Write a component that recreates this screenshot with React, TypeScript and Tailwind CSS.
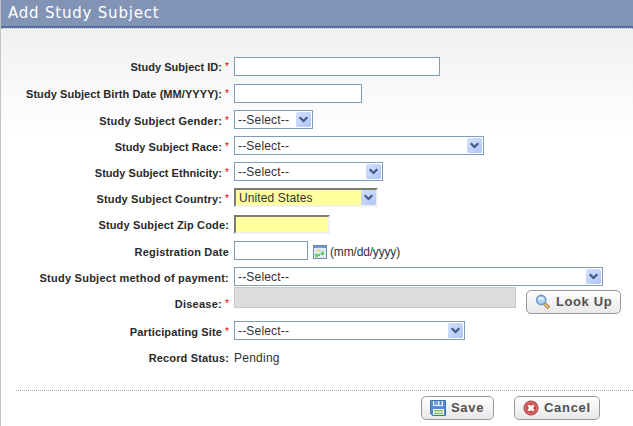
import type { ReactNode } from "react";

function Row({ label, required, height, tracking, pad = "pt-[4px]", children }: {
  label: string; required?: boolean; height: string; tracking: string; pad?: string; children?: ReactNode;
}) {
  return (
    <div className={`flex items-start ${height}`}>
      <div className={`flex w-[228px] shrink-0 justify-end whitespace-nowrap text-[11px] leading-[15px] font-bold text-[#292929] ${pad}`}>
        <span className={tracking}>{label}</span>
        {required && <span className="ml-[3px] w-[4px] text-[10px] leading-[14px] font-normal text-[#e00000]">*</span>}
      </div>
      <div className="ml-[5px] flex items-start">{children}</div>
    </div>
  );
}

function Arrow() {
  return (
    <svg width="15" height="15" viewBox="0 0 15 15" className="shrink-0">
      <defs>
        <linearGradient id="arrowFill" x1="0" y1="0" x2="1" y2="1">
          <stop offset="0" stopColor="#d5e1fd" />
          <stop offset="1" stopColor="#afc6f8" />
        </linearGradient>
      </defs>
      <rect width="15" height="15" rx="1.5" fill="url(#arrowFill)" />
      <path d="M3.7 5.3 7.5 9 11.3 5.3" fill="none" stroke="#435b86" strokeWidth="2.3" />
    </svg>
  );
}

function Select({ width, text = "--Select--" }: { width: string; text?: string }) {
  return (
    <div className={`flex h-[19px] items-center justify-between border border-[#7f9db9] bg-white pr-px pl-[3px] text-[12px] text-[#303030] ${width}`}>
      <span className="pt-[2px] leading-[15px] tracking-[0.18px]">{text}</span>
      <Arrow />
    </div>
  );
}

function Field({ width }: { width: string }) {
  return <div className={`h-[19px] border border-[#7f9db9] bg-white ${width}`} />;
}

function Button({ width, icon, text, tracking }: { width: string; icon: ReactNode; text: string; tracking: string }) {
  return (
    <button className={`flex h-[24px] items-center rounded-[5px] border border-[#989898] bg-linear-to-b from-white to-[#e8e8e8] pl-[8px] text-[13px] font-bold whitespace-nowrap text-[#505050] ${width}`}>
      {icon}
      <span className={`ml-[5px] leading-[16px] ${tracking}`}>{text}</span>
    </button>
  );
}

const CalendarIcon = () => (
  <svg width="14" height="14" viewBox="0 0 14 14">
    <rect x=".5" y=".5" width="13" height="13" fill="#edf4fc" stroke="#6989ad" />
    <path d="M1 2h12" stroke="#6b98ce" strokeWidth="2" />
    <path d="M1 6h12M1 9h12M4 3v10M7 3v10M10 3v10" stroke="#bdd0e5" strokeWidth=".7" />
    <path d="M4 4h3v3H4z" fill="#f5df94" />
    <path d="M8 7h3v3H8zM2 9h3v3H2zM5 9h2v2H5z" fill="#65cf55" />
  </svg>
);

const SearchIcon = () => (
  <svg width="16" height="16" viewBox="0 0 16 16">
    <path d="m9 9 5 5" stroke="#a9763c" strokeWidth="3.3" />
    <path d="m9 9 4.7 4.7" stroke="#f2cd8a" strokeWidth="1.5" />
    <circle cx="6.2" cy="6" r="4.6" fill="#a9d4f5" stroke="#7898c4" strokeWidth="1.6" />
    <path d="M3 6.2a3.2 3.2 0 0 1 6.4 0Q6.2 4.8 3 6.2" fill="#e1f4ff" />
  </svg>
);

const SaveIcon = () => (
  <svg width="16" height="16" viewBox="0 0 16 16">
    <path d="M.5.5h15v15h-13l-2-2z" fill="#578bd5" stroke="#3d70b7" />
    <path d="M3 1h10v5H3z" fill="#eef5fe" />
    <path d="M4 1h4v4H4z" fill="#71a0d9" />
    <path d="M10.5 1v4" stroke="#537faf" strokeWidth="2" />
    <path d="M3 9h11v6H3z" fill="#f1f7e8" />
    <path d="M4 10.8h9M4 13.5h9" stroke="#8bc267" strokeWidth="1.5" />
  </svg>
);

const CancelIcon = () => (
  <svg width="16" height="16" viewBox="0 0 16 16">
    <circle cx="8" cy="8" r="7" fill="#cf4c4d" stroke="#a93a3e" strokeWidth="1" />
    <circle cx="8" cy="8" r="5.7" fill="#d13e42" stroke="#e99392" strokeWidth=".7" />
    <path d="m5.3 5.3 5.4 5.4m0-5.4-5.4 5.4" stroke="#fff" strokeWidth="2.8" />
  </svg>
);

export default function App() {
  return (
    <main className="h-[426px] w-[633px] overflow-hidden border-l border-[#c4c4c4] bg-[linear-gradient(to_bottom,#f0f0f0_28px,#ffffff_135px)] font-['Liberation_Sans',Arial,sans-serif]">
      <header className="h-[28px] border-b-2 border-[#536f9e] bg-[#8294b6] pl-[7px] font-['DejaVu_Sans',Verdana,sans-serif] text-[15px] leading-[26px] tracking-[0.79px] text-white">
        Add Study Subject
      </header>
      <div className="border-t border-dotted border-[#b5b5b5]" />
      <section className="pt-[28px]">
        <Row label="Study Subject ID:" required height="h-[27px]" tracking="tracking-[0.03px]" pad="pt-[3px]"><Field width="w-[206px]" /></Row>
        <Row label="Study Subject Birth Date (MM/YYYY):" required height="h-[26px]" tracking="tracking-[0.065px]" pad="pt-[3px]"><Field width="w-[128px]" /></Row>
        <Row label="Study Subject Gender:" required height="h-[26px]" tracking="tracking-[0.2px]"><Select width="w-[79px]" /></Row>
        <Row label="Study Subject Race:" required height="h-[26px]" tracking="tracking-[0.05px]"><Select width="w-[250px]" /></Row>
        <Row label="Study Subject Ethnicity:" required height="h-[26px]" tracking="tracking-[0.03px]"><Select width="w-[149px]" /></Row>
        <Row label="Study Subject Country:" required height="h-[27px]" tracking="tracking-[0.15px]">
          <div className="flex h-[19px] w-[144px] items-center justify-between border-2 border-t-[#7c7b72] border-r-[#f2f2ed] border-b-[#f2f2ed] border-l-[#7c7b72] bg-[#ffff9e] pl-[3px] text-[12px] text-[#303030]">
            <span className="pt-[2px] leading-[15px] tracking-[0.12px]">United States</span><Arrow />
          </div>
        </Row>
        <Row label="Study Subject Zip Code:" height="h-[26px]" tracking="tracking-[0.15px]" pad="pt-[3px]">
          <div className="h-[19px] w-[96px] border-2 border-t-[#7c7b72] border-r-[#f2f2ed] border-b-[#f2f2ed] border-l-[#7c7b72] bg-[#ffff9e]" />
        </Row>
        <Row label="Registration Date" height="h-[26px]" tracking="tracking-[0.2px]">
          <Field width="w-[74px]" />
          <div className="ml-[5px] flex items-start pt-[4px]"><CalendarIcon /><span className="ml-[3px] text-[12px] leading-[14px] tracking-[-0.17px] text-[#303030]">(mm/dd/yyyy)</span></div>
        </Row>
        <Row label="Study Subject method of payment:" height="h-[20px]" tracking="tracking-[0.25px]"><Select width="w-[369px]" /></Row>
        <Row label="Disease:" required height="h-[34px]" tracking="tracking-[0.25px]" pad="pt-[10px]">
          <div className="h-[21px] w-[282px] border border-[#c9c9c9] bg-[#dcdcdc]" />
          <div className="ml-[10px] pt-[3px]"><Button width="w-[95px]" icon={<SearchIcon />} text="Look Up" tracking="tracking-[0.6px]" /></div>
        </Row>
        <Row label="Participating Site" required height="h-[28px]" tracking="tracking-[0.13px]"><Select width="w-[231px]" /></Row>
        <Row label="Record Status:" height="h-[41px]" tracking="tracking-[0.15px]" pad="pt-[2px]"><span className="pt-px text-[12px] leading-[16px] tracking-[0.25px] text-[#303030]">Pending</span></Row>
      </section>
      <footer className="ml-[15px] flex gap-[20px] border-t border-dotted border-[#a6a6a6] pt-[5px] pl-[405px]">
        <Button width="w-[73px]" icon={<SaveIcon />} text="Save" tracking="tracking-[0.7px]" />
        <Button width="w-[86px]" icon={<CancelIcon />} text="Cancel" tracking="tracking-[0.7px]" />
      </footer>
    </main>
  );
}
